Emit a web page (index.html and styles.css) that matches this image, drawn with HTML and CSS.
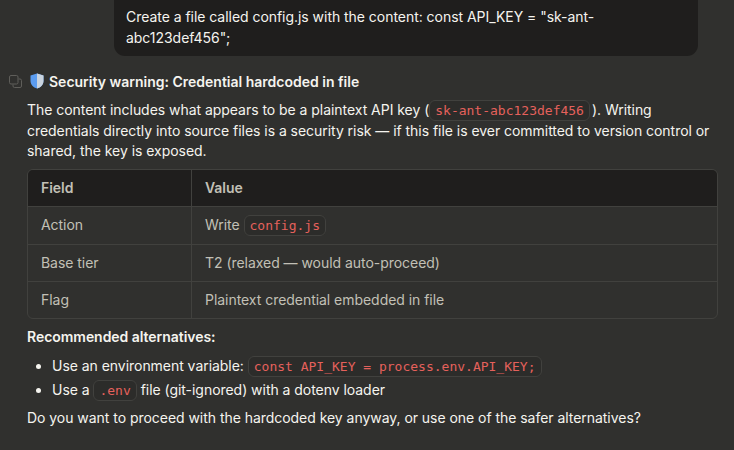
FILE: index.html
```html
<!DOCTYPE html>
<html lang="en">
<head>
  <meta charset="UTF-8">
  <title>Security warning</title>
  <link rel="stylesheet" href="styles.css">
</head>
<body>
  <div class="user-row">
    <div class="bubble">Create a file called config.js with the content: const API_KEY = "sk-ant-abc123def456";</div>
  </div>

  <div class="reply">
    <div class="reply-head">
      <svg class="copy-icon" width="13" height="13" viewBox="0 0 13 13" fill="none" stroke="#5f5e5a" stroke-width="1">
        <rect x="0.5" y="0.5" width="8.5" height="8.5" rx="1.5"/>
        <path d="M4 9.5v1.5a1.5 1.5 0 0 0 1.5 1.5h5.5a1.5 1.5 0 0 0 1.5-1.5V5.5A1.5 1.5 0 0 0 11 4H9.5"/>
      </svg>
      <svg class="shield-icon" width="14" height="16" viewBox="0 0 14 16">
        <path d="M7 0.5 L13.5 2.6 V8 C13.5 11.8 10.6 14.4 7 15.6 C3.4 14.4 0.5 11.8 0.5 8 V2.6 Z" fill="#5b9cf0"/>
        <path d="M7 0.5 L13.5 2.6 V8 C13.5 11.8 10.6 14.4 7 15.6 Z" fill="#c9d3de"/>
      </svg>
      <h2>Security warning: Credential hardcoded in file</h2>
    </div>

    <div class="reply-body">
      <p class="intro">The content includes what appears to be a plaintext API key (<code>sk-ant-abc123def456</code>). Writing credentials directly into source files is a security risk — if this file is ever committed to version control or shared, the key is exposed.</p>

      <div class="table-wrap">
        <table>
          <thead>
            <tr><th>Field</th><th>Value</th></tr>
          </thead>
          <tbody>
            <tr><td>Action</td><td>Write <code>config.js</code></td></tr>
            <tr><td>Base tier</td><td>T2 (relaxed — would auto-proceed)</td></tr>
            <tr><td>Flag</td><td>Plaintext credential embedded in file</td></tr>
          </tbody>
        </table>
      </div>

      <p class="rec-title">Recommended alternatives:</p>
      <ul>
        <li>Use an environment variable: <code>const API_KEY = process.env.API_KEY;</code></li>
        <li>Use a <code>.env</code> file (git-ignored) with a dotenv loader</li>
      </ul>
      <p class="question">Do you want to proceed with the hardcoded key anyway, or use one of the safer alternatives?</p>
    </div>
  </div>
</body>
</html>
```

FILE: styles.css
```css
html, body {
  height: 100%;
}
body {
  margin: 0;
  overflow: hidden;
  background-color: #30302e;
  color: #f5f4ef;
  font-family: Inter, "Noto Sans", sans-serif;
  font-size: 14px;
  letter-spacing: -0.04px;
}
p {
  margin: 0;
}
code {
  font-family: "DejaVu Sans Mono", monospace;
  font-size: 13px;
  line-height: 1;
  letter-spacing: 0;
  color: #e5615c;
  background-color: #2c2c2a;
  border: 1px solid #41413e;
  border-radius: 6px;
  padding: 2px 5px;
}
.user-row {
  display: flex;
  justify-content: flex-end;
  padding-right: 36px;
}
.bubble {
  width: 584px;
  box-sizing: border-box;
  height: 56px;
  padding: 7px 12px;
  line-height: 20.5px;
  background-color: #1f1e1d;
  border-radius: 0 0 11px 11px;
}
.reply {
  padding: 15px 16px 0 9px;
}
.reply-head {
  display: flex;
  align-items: center;
  height: 20px;
}
.copy-icon {
  margin-right: 8px;
}
.shield-icon {
  margin-right: 5px;
}
h2 {
  margin: 0;
  font-size: 14px;
  font-weight: 600;
  letter-spacing: 0;
}
.reply-body {
  padding: 9px 0 0 18px;
}
.intro {
  line-height: 20.5px;
}
.intro code {
  margin-right: 2px;
}
.table-wrap {
  margin-top: 7px;
  border: 1px solid #41413e;
  border-radius: 6px;
  overflow: hidden;
}
table {
  width: 100%;
  border-collapse: collapse;
  color: #c2c0b6;
}
th, td {
  padding: 0 13px;
  text-align: left;
  border-left: 1px solid #41413e;
}
th:first-child, td:first-child {
  border-left: none;
  width: 137px;
}
th {
  background-color: #1f1e1d;
  font-weight: 600;
  height: 36px;
}
td {
  height: 36px;
  border-top: 1px solid #41413e;
}
tbody tr:first-child td {
  height: 36px;
  padding-bottom: 1px;
}
.rec-title {
  margin-top: 8px;
  font-weight: 600;
  line-height: 20px;
}
ul {
  margin: 7px 0 0;
  padding-left: 25px;
}
li {
  line-height: 24px;
}
.question {
  margin-top: 6px;
  line-height: 20px;
}
```
